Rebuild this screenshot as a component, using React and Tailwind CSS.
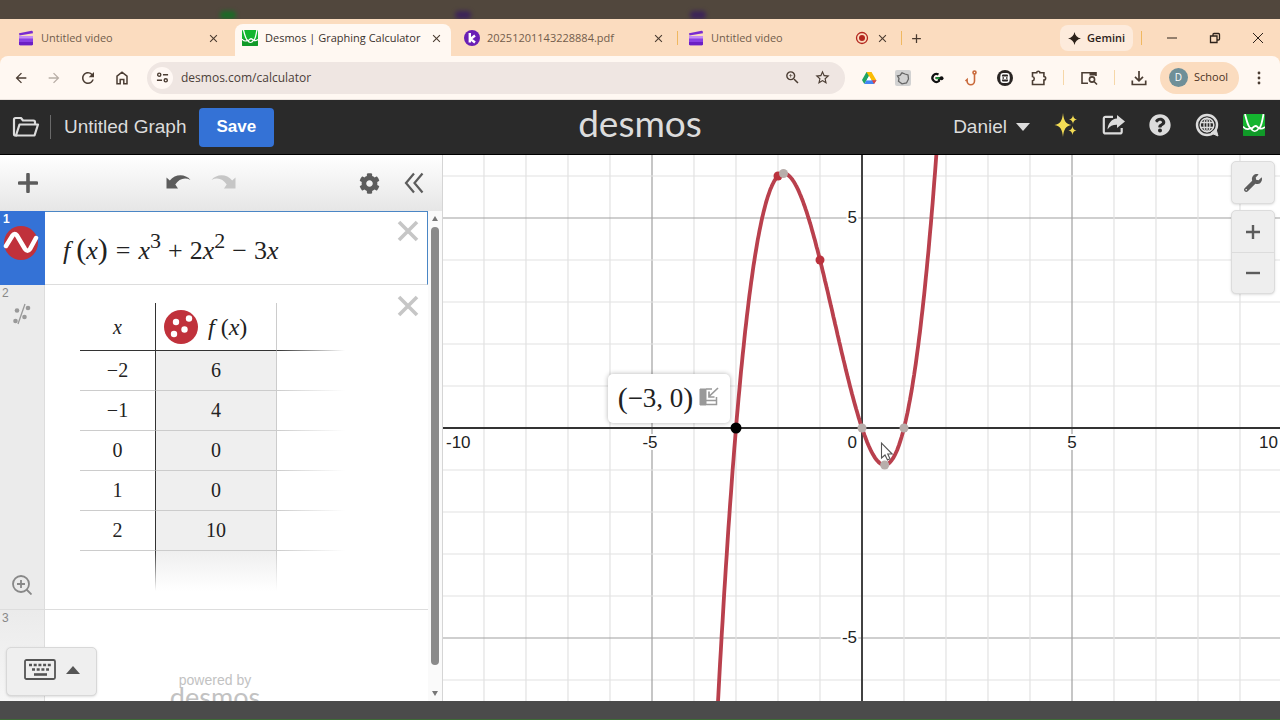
import { FaWrench, FaCog, FaQuestionCircle } from 'react-icons/fa';
import { MdArrowBack, MdArrowForward, MdRefresh, MdClose, MdAdd, MdZoomIn, MdStarBorder } from 'react-icons/md';

const UNIT = 42;
const ORIGIN = { x: 419, y: 273 };
const VIEW = { w: 837, h: 546 };

const px = (x) => ORIGIN.x + x * UNIT;
const py = (y) => ORIGIN.y - y * UNIT;
const f = (x) => x ** 3 + 2 * x ** 2 - 3 * x;

const rows = [
  ['−2', '6'],
  ['−1', '4'],
  ['0', '0'],
  ['1', '0'],
  ['2', '10'],
];

function curvePath() {
  const points = [];
  for (let x = -3.6; x <= 2; x += 0.02) {
    points.push(`${px(x).toFixed(1)},${py(f(x)).toFixed(1)}`);
  }
  return `M${points.join('L')}`;
}

function ClapperIcon() {
  return (
    <svg viewBox="0 0 16 16" className="size-4 shrink-0">
      <path d="M1 3.2 13.6.8a1 1 0 0 1 1.1.8l.3 1.6L1.4 5.6z" fill="#7a2bd0" />
      <path d="M1 6h14v3.5H1z" fill="#c48cf5" />
      <path d="M1 8.5h14V14a1.2 1.2 0 0 1-1.2 1.2H2.2A1.2 1.2 0 0 1 1 14z" fill="#8a3fe4" />
      <path d="M1 12h14v2a1.2 1.2 0 0 1-1.2 1.2H2.2A1.2 1.2 0 0 1 1 14z" fill="#6a1fc4" />
    </svg>
  );
}

function DesmosIcon({ className }) {
  return (
    <svg viewBox="0 0 22 22" className={`shrink-0 ${className}`}>
      <rect width="22" height="22" rx="1.5" fill="#14b52f" />
      <path d="M0 12h22v8.5a1.5 1.5 0 0 1-1.5 1.5h-19A1.5 1.5 0 0 1 0 20.5z" fill="#109a28" />
      <path d="M2 0C4 8 5.500 14 8 14.500c2 0 2.500-2.500 4.500-2.500s2.500 2.500 4 2C18.500 12 19.500 6 20.500 0" fill="none" stroke="#fff" strokeWidth="1.800" />
      <path d="M0 12.500c2.500 3 5.500 3 7.500 1.500 2.500 4 5.500 4.500 8.500 0 2 1.500 4 .5 6-1" fill="none" stroke="#fff" strokeWidth="1.600" />
    </svg>
  );
}

function KamiIcon() {
  return (
    <svg viewBox="0 0 16 16" className="size-4 shrink-0">
      <circle cx="8" cy="8" r="8" fill="#6a1fb5" />
      <path d="M5.800 3v9.500M11 5.500 6.500 9l4.500 3.500" fill="none" stroke="#fff" strokeWidth="2.400" />
    </svg>
  );
}

function Tab({ icon, title, className, active, recording }) {
  return (
    <div
      className={`flex h-full shrink-0 items-center gap-[7px] pb-1 text-[11px] ${className} ${
        active ? 'rounded-t-lg bg-[#fff8f2] text-[#3b322c]' : 'text-[#725d4c]'
      }`}
    >
      {icon}
      <button type="button" className="min-w-0 flex-1 text-left whitespace-nowrap">{title}</button>
      {recording && (
        <svg viewBox="0 0 14 14" className="size-[14px]">
          <circle cx="7" cy="7" r="5.500" fill="none" stroke="#b3261e" strokeWidth="1.300" />
          <circle cx="7" cy="7" r="3" fill="#b3261e" />
        </svg>
      )}
      <button type="button" aria-label="Close tab" className="text-[#4a3b30]">
        <MdClose size={13} />
      </button>
    </div>
  );
}

function TabStrip() {
  return (
    <div className="flex h-[37px] shrink-0 items-center bg-[#fbdcbf] pt-[5px]">
      <Tab icon={<ClapperIcon />} title="Untitled video" className="w-[235px] pr-[15px] pl-[18px]" />
      <Tab icon={<DesmosIcon className="size-4" />} title="Desmos | Graphing Calculator" active className="w-[216px] pr-2 pl-[7px]" />
      <Tab icon={<KamiIcon />} title="20251201143228884.pdf" className="w-[226px] pr-3 pl-[13px]" />
      <span className="mb-1 h-[14px] w-px bg-[#f0b860]" />
      <Tab icon={<ClapperIcon />} title="Untitled video" recording className="w-[223px] pr-3 pl-[10px]" />
      <span className="mb-1 h-[14px] w-px bg-[#f0b860]" />
      <button type="button" aria-label="New tab" className="mb-1 ml-[7px] text-[#4a3b30]">
        <MdAdd size={15} />
      </button>
      <div className="mb-1 ml-auto flex items-center pr-4 text-[#2d221a]">
        <button type="button" className="flex h-[26px] items-center gap-1.5 rounded-lg bg-[#fdebdc] px-2 text-[11px] font-semibold">
          <svg viewBox="0 0 14 14" className="size-[13px]">
            <path d="M7 0c.8 4 3 6.200 7 7-4 .8-6.200 3-7 7-.8-4-3-6.200-7-7 4-.8 6.200-3 7-7z" fill="currentColor" />
          </svg>
          Gemini
        </button>
        <span className="mr-6 ml-2 h-[14px] w-px bg-[#f0b860]" />
        <button type="button" aria-label="Minimize">
          <svg viewBox="0 0 12 12" className="size-3"><path d="M1 6h10" stroke="currentColor" /></svg>
        </button>
        <button type="button" aria-label="Restore" className="ml-[31px]">
          <svg viewBox="0 0 12 12" className="size-3" fill="none" stroke="currentColor" strokeWidth="1.300">
            <path d="M1.500 4h6.500v6.500H1.500zM4 4V2.500A1 1 0 0 1 5 1.500h4.500a1 1 0 0 1 1 1V7a1 1 0 0 1-1 1H8" />
          </svg>
        </button>
        <button type="button" aria-label="Close window" className="ml-[31px]">
          <svg viewBox="0 0 12 12" className="size-3"><path d="m1 1 10 10M11 1 1 11" stroke="currentColor" /></svg>
        </button>
      </div>
    </div>
  );
}

function Extensions() {
  return (
    <div className="flex items-center gap-[18px] text-[#4b3d33]">
      <button type="button" aria-label="Google Drive">
        <svg viewBox="0 0 16 16" className="size-4">
          <path d="M5.500 2h5L8 6.200 3.300 14 1 10z" fill="#1fa463" />
          <path d="M5.500 2h5L15.500 10.500h-5z" fill="#fbbc04" />
          <path d="M3.300 14 5.600 10.200h9.900L13 14z" fill="#4285f4" />
          <path d="m11 10.200 4.500 0L13 14z" fill="#ea4335" />
          <path d="M8 6 10.400 10.200H5.600z" fill="#fff" />
        </svg>
      </button>
      <button type="button" aria-label="Sketch extension">
        <svg viewBox="0 0 16 16" className="size-4" fill="none">
          <rect width="16" height="16" rx="2" fill="#d2d2d2" />
          <path d="m2.500 6 2.500-.5L7 2.800l3 1.200 3 1 .5 4-2 4-4.500.8-3.500-2.500.5-3z" stroke="#666" strokeWidth="1.300" />
        </svg>
      </button>
      <button type="button" aria-label="Grammar extension">
        <svg viewBox="0 0 16 16" className="size-4" fill="none">
          <path d="M9.500 4.500A4 4 0 1 0 10 11V8H6.500" stroke="#111" strokeWidth="2.200" />
          <path d="M7 8.200h5" stroke="#1c9a3a" strokeWidth="2" />
          <circle cx="12.500" cy="8.200" r="2" fill="#111" />
        </svg>
      </button>
      <button type="button" aria-label="Hook extension">
        <svg viewBox="0 0 16 16" className="size-4" fill="none" stroke="#c9693a" strokeWidth="1.600">
          <circle cx="11.500" cy="2.500" r="1.500" />
          <path d="M11.500 4v7a3.700 3.700 0 0 1-7.400 0V9.500L2.500 11" />
        </svg>
      </button>
      <button type="button" aria-label="Reader extension">
        <svg viewBox="0 0 16 16" className="size-4">
          <circle cx="8" cy="8" r="8" fill="#2a2523" />
          <rect x="4.200" y="3.800" width="7.600" height="8.400" rx="2" fill="none" stroke="#fff" strokeWidth="1.500" />
          <path d="M3.500 6.500h9v3h-9z" fill="#fff" />
          <path d="M5.500 7.300h1.500v1.400H5.500zM9 7.300h1.500v1.400H9z" fill="#2a2523" />
        </svg>
      </button>
      <button type="button" aria-label="Extensions">
        <svg viewBox="0 0 16 16" className="size-4" fill="none" stroke="currentColor" strokeWidth="1.600">
          <path d="M1.500 2.800H5.700a1.600 1.600 0 0 1 3.200 0h4v3.700a1.600 1.600 0 0 1 0 3.500v4.500H1.500v-3.700a2.200 2.200 0 0 0 0-4.300z" />
        </svg>
      </button>
    </div>
  );
}

function AddressBar() {
  return (
    <div className="flex h-[44px] shrink-0 items-center bg-[#fbdcbf]">
      <div className="flex h-full w-full items-center rounded-t-lg border-b border-[#e9e2dd] bg-[#fff8f2] pr-[13px] pl-[13px] text-[#4b3d33]">
        <div className="flex items-center gap-[17px]">
          <button type="button" aria-label="Back"><MdArrowBack size={16} /></button>
          <button type="button" aria-label="Forward" className="text-[#b8aea6]"><MdArrowForward size={16} /></button>
          <button type="button" aria-label="Reload"><MdRefresh size={18} /></button>
          <button type="button" aria-label="Home">
            <svg viewBox="0 0 16 16" className="size-4" fill="none" stroke="currentColor" strokeWidth="1.500">
              <path d="M3 6.200 8 2.200l5 4v7.600H9.800V9.500H6.200v4.300H3z" />
            </svg>
          </button>
        </div>
        <div className="ml-[17px] flex h-8 flex-1 items-center rounded-full bg-[#efe6e2] pr-[14px] pl-1">
          <button type="button" aria-label="Site information" className="flex size-[22px] items-center justify-center rounded-full bg-[#fff8f4]">
            <svg viewBox="0 0 14 14" className="size-[13px]" fill="none" stroke="currentColor" strokeWidth="1.500">
              <circle cx="3.500" cy="4" r="1.700" />
              <path d="M7.500 4H13M1 10h5.500" />
              <circle cx="10.500" cy="10" r="1.700" />
            </svg>
          </button>
          <input
            type="text"
            aria-label="Address"
            defaultValue="desmos.com/calculator"
            className="ml-2 min-w-0 flex-1 bg-transparent text-xs text-[#4b4039] outline-none"
          />
          <button type="button" aria-label="Zoom"><MdZoomIn size={17} /></button>
          <button type="button" aria-label="Bookmark" className="ml-[13px]"><MdStarBorder size={17} /></button>
        </div>
        <div className="ml-4 flex items-center">
          <Extensions />
          <span className="mr-4 ml-4 h-[15px] w-px bg-[#f6d7a8]" />
          <button type="button" aria-label="Search side panel">
            <svg viewBox="0 0 18 16" className="h-4 w-[18px]" fill="none" stroke="currentColor" strokeWidth="1.600">
              <path d="M8 13.200H2V2.800h14V6" />
              <path d="M9.500 2.500H16V5.500H9.500z" fill="currentColor" stroke="none" />
              <circle cx="12" cy="9.500" r="2.600" />
              <path d="m14 11.500 3 3" />
            </svg>
          </button>
          <span className="mr-4 ml-4 h-[15px] w-px bg-[#f6d7a8]" />
          <button type="button" aria-label="Downloads">
            <svg viewBox="0 0 16 16" className="size-4" fill="none" stroke="currentColor" strokeWidth="1.700">
              <path d="M8 1v9.500M4 6.800l4 4 4-4M1.300 10.500v4h13.400v-4" />
            </svg>
          </button>
          <button type="button" className="ml-[13px] flex h-8 w-[79px] items-center gap-1.5 rounded-full bg-[#fbdcbf] pl-[9px] text-[11px] text-[#4b3324]">
            <span className="flex size-[19px] items-center justify-center rounded-full bg-[#6f8f98] text-[10px] text-white">D</span>
            School
          </button>
          <button type="button" aria-label="Menu" className="ml-3">
            <svg viewBox="0 0 16 16" className="size-4" fill="currentColor">
              <circle cx="8" cy="3" r="1.400" />
              <circle cx="8" cy="8" r="1.400" />
              <circle cx="8" cy="13" r="1.400" />
            </svg>
          </button>
        </div>
      </div>
    </div>
  );
}

function Header() {
  return (
    <header className="grid h-[55px] shrink-0 grid-cols-[1fr_auto_1fr] items-center border-b border-black bg-[#2a2a2a] text-[19px] text-[#dcdcdc]">
      <div className="flex items-center pl-3">
        <button type="button" aria-label="Open graph">
          <svg viewBox="0 0 28 22" className="h-[22px] w-7" fill="none" stroke="currentColor" strokeWidth="2.200" strokeLinejoin="round">
            <path d="M5 19.500H3.500a1.500 1.500 0 0 1-1.500-1.500V3.500A1.500 1.500 0 0 1 3.500 2H9l2 2.500h10.500A1.500 1.500 0 0 1 23 6v2" />
            <path d="M7.500 8.500H26l-3.500 11H4z" />
          </svg>
        </button>
        <span className="ml-2.5 h-6 w-px bg-[#6a6a6a]" />
        <button type="button" className="ml-[13px]">Untitled Graph</button>
        <button type="button" className="ml-3 h-[39px] rounded-[4px] bg-[#3472d6] px-[18px] text-[17px] font-bold text-white">Save</button>
      </div>
      <a href="#desmos" className="pb-2 font-['Lato',sans-serif] text-[37px] leading-[46px]">desmos</a>
      <div className="flex items-center justify-end gap-6 pr-[15px]">
        <button type="button" className="flex items-center gap-[9px]">
          Daniel
          <svg viewBox="0 0 14 8" className="h-2 w-[14px]"><path d="M0 0h14L7 8z" fill="currentColor" /></svg>
        </button>
        <button type="button" aria-label="What's new" className="pb-1">
          <svg viewBox="0 0 24 26" className="h-[26px] w-6" fill="#f3dc55">
            <path d="M9 1c.8 7.500 2.500 11 8.500 12-6 1-7.700 4.500-8.500 12-.8-7.500-2.500-11-8.500-12C6.500 12 8.200 8.500 9 1z" />
            <path d="M19 3c.4 2.800 1.200 4 4 4.500-2.800.5-3.600 1.700-4 4.500-.4-2.800-1.200-4-4-4.500 2.800-.5 3.600-1.700 4-4.500zM18.500 14c.4 2.800 1.200 4 4 4.500-2.800.5-3.600 1.700-4 4.500-.4-2.800-1.200-4-4-4.500 2.800-.5 3.600-1.700 4-4.500z" />
          </svg>
        </button>
        <button type="button" aria-label="Share" className="pb-1">
          <svg viewBox="0 0 23 20" className="h-5 w-[23px]" fill="none" stroke="currentColor" strokeWidth="2.200">
            <path d="M11 1.800H3.500A1.700 1.700 0 0 0 1.800 3.500v13.200a1.700 1.700 0 0 0 1.700 1.700h14.500a1.700 1.700 0 0 0 1.700-1.700V13" />
            <path d="M15 0 23 6.500 15 13V9.800c-4-.1-7 1-9.500 4.700C6 8.500 9.500 4 15 3.500z" fill="currentColor" stroke="none" />
          </svg>
        </button>
        <button type="button" aria-label="Help" className="pb-1"><FaQuestionCircle size={22} /></button>
        <button type="button" aria-label="Language" className="pb-1">
          <svg viewBox="0 0 24 24" className="size-6" fill="none" stroke="currentColor">
            <circle cx="12" cy="12" r="10" strokeWidth="2.400" />
            <path d="m16 20 7 3-2-7z" fill="currentColor" />
            <circle cx="12" cy="12" r="6.800" strokeWidth="1.500" />
            <ellipse cx="12" cy="12" rx="3" ry="6.800" strokeWidth="1.300" />
            <path d="M12 5v14M6 9.500h12M6 14.500h12" strokeWidth="1.300" />
          </svg>
        </button>
        <a href="#account" aria-label="Desmos" className="pb-1"><DesmosIcon className="size-[22px]" /></a>
      </div>
    </header>
  );
}

function PanelToolbar() {
  return (
    <div className="flex h-14 shrink-0 items-center bg-linear-to-b from-white to-[#e6e6e6] pr-[18px] pl-[18px] text-[#5c5c5c]">
      <button type="button" aria-label="Add item">
        <svg viewBox="0 0 20 20" className="size-5"><path d="M10 1.500v17M1.500 10h17" stroke="currentColor" strokeWidth="3.600" strokeLinecap="round" /></svg>
      </button>
      <div className="ml-auto flex gap-5 pb-0.5">
        <button type="button" aria-label="Undo">
          <svg viewBox="0 0 26 16" className="h-4 w-[26px]" fill="currentColor">
            <path d="M1.500 3.500 4.800 6.500C10 0 20-.5 25.500 6 19.500 3 14 5 10.300 10.500L13 14.500H1.500z" />
          </svg>
        </button>
        <button type="button" aria-label="Redo" disabled className="text-[#c6c6c6]">
          <svg viewBox="0 0 26 16" className="h-4 w-[26px]" fill="currentColor">
            <path d="M24.500 3.500 21.200 6.500C16 0 6-.5.5 6 6.500 3 12 5 15.700 10.500L13 14.500h11.500z" />
          </svg>
        </button>
      </div>
      <button type="button" aria-label="Edit list" className="ml-[122px]"><FaCog size={21} /></button>
      <button type="button" aria-label="Hide list" className="ml-6">
        <svg viewBox="0 0 20 22" className="h-[22px] w-5" fill="none" stroke="currentColor" strokeWidth="2.200">
          <path d="M10 1.500 2 11l8 9.500M18.500 1.500l-8 9.500 8 9.500" />
        </svg>
      </button>
    </div>
  );
}

function DeleteButton() {
  return (
    <button type="button" aria-label="Delete" className="shrink-0 self-start text-[#c6c6c6]">
      <svg viewBox="0 0 22 22" className="size-[22px]"><path d="m2 2 18 18M20 2 2 20" stroke="currentColor" strokeWidth="3.600" /></svg>
    </button>
  );
}

function Formula() {
  return (
    <p className="flex flex-1 items-baseline font-['Liberation_Serif',serif] text-[26px] leading-8 text-[#222]">
      <i>f</i>
      <span className="ml-1.5 text-[30px] leading-8">(</span>
      <i>x</i>
      <span className="text-[30px] leading-8">)</span>
      <span className="mx-2">=</span>
      <i>x</i>
      <sup className="text-[22px] leading-none">3</sup>
      <span className="mx-[7px]">+</span>
      2<i>x</i>
      <sup className="text-[22px] leading-none">2</sup>
      <span className="mx-[7px]">−</span>
      3<i>x</i>
    </p>
  );
}

function ValueTable() {
  const fade = 'w-[68px] bg-linear-to-r to-transparent bg-bottom bg-no-repeat';
  return (
    <table className="border-separate border-spacing-0 text-center font-['Liberation_Serif',serif] text-xl text-[#222]">
      <thead>
        <tr className="h-12">
          <th scope="col" className="w-[75px] border-b border-[#333] font-normal italic">x</th>
          <th scope="col" className="w-[122px] border-r border-b border-l border-r-[#ccc] border-b-[#333] border-l-[#333] p-0 font-normal">
            <div className="flex items-center gap-2.5 pl-2 text-2xl">
              <svg viewBox="0 0 34 34" className="size-[34px]">
                <circle cx="17" cy="17" r="17" fill="#c0313b" />
                <g fill="#fff">
                  <circle cx="25" cy="8.500" r="3.200" />
                  <circle cx="12" cy="12" r="3.200" />
                  <circle cx="20.500" cy="19.500" r="3.200" />
                  <circle cx="10" cy="24" r="3.200" />
                </g>
              </svg>
              <span><i>f</i> (<i>x</i>)</span>
            </div>
          </th>
          <th className={`${fade} from-[#333] bg-[length:100%_1px]`} />
        </tr>
      </thead>
      <tbody>
        {rows.map(([x, y]) => (
          <tr key={x} className="h-10">
            <td className="border-b border-[#ccc] p-0 pb-0.5">{x}</td>
            <td className="border-r border-b border-l border-r-[#ccc] border-b-[#ccc] border-l-[#333] bg-[#efefef] p-0 pb-0.5">{y}</td>
            <td className={`${fade} from-[#ccc] bg-[length:100%_1px] p-0`} />
          </tr>
        ))}
        <tr className="h-10">
          <td />
          <td className="p-0">
            <div className="flex h-10">
              <span className="w-px bg-linear-to-b from-[#333] to-transparent" />
              <span className="flex-1 bg-linear-to-b from-[#efefef] to-white" />
              <span className="w-px bg-linear-to-b from-[#ccc] to-transparent" />
            </div>
          </td>
          <td />
        </tr>
      </tbody>
    </table>
  );
}

function Scrollbar() {
  return (
    <div className="flex w-[14px] shrink-0 flex-col items-center bg-[#fafafa] py-1">
      <svg viewBox="0 0 8 6" className="h-1.5 w-2"><path d="M1 6h6L4 1z" fill="#777" /></svg>
      <div className="mt-1.5 mb-[26px] w-2 flex-1 rounded-full bg-[#8a8a8a]" />
      <svg viewBox="0 0 8 6" className="h-1.5 w-2"><path d="M1 0h6L4 5z" fill="#777" /></svg>
    </div>
  );
}

function ExpressionPanel() {
  return (
    <section className="relative flex w-[443px] shrink-0 flex-col border-r border-[#d5d5d5] bg-white">
      <PanelToolbar />
      <div className="flex min-h-0 flex-1">
        <div className="flex min-w-0 flex-1 flex-col overflow-hidden">
          {/* Expression 1 */}
          <div className="flex h-[74px] shrink-0">
            <div className="w-[45px] shrink-0 bg-[#3472d6] px-[3px] pt-0.5 text-xs leading-3 font-bold text-white">
              1
              <svg viewBox="0 0 36 36" className="size-[36px]">
                <circle cx="18" cy="18" r="17" fill="#c0313b" />
                <path d="M3 21 9.500 10.500q2-3 4.500 0L22 24q2.500 3.500 5 0L33 13" fill="none" stroke="#fff" strokeWidth="4.500" strokeLinecap="round" />
              </svg>
            </div>
            <div className="flex flex-1 items-center border-t border-r border-b border-t-[#4a86c5] border-r-[#4a86c5] border-b-[#ddd] pt-2 pr-2 pb-1 pl-[18px]">
              <Formula />
              <DeleteButton />
            </div>
          </div>
          {/* Expression 2 */}
          <div className="flex shrink-0 border-b border-[#ddd]">
            <div className="flex w-[45px] shrink-0 flex-col border-r border-[#ddd] bg-[#ebebeb] px-0.5 pb-[14px] text-xs leading-4 text-[#888]">
              2
              <svg viewBox="0 0 20 22" className="mt-0.5 ml-2.5 h-[22px] w-5" fill="#999">
                <path d="m13 1-7 20" stroke="#999" strokeWidth="1.300" />
                <circle cx="5" cy="7.500" r="2.300" />
                <circle cx="16" cy="5" r="2.300" />
                <circle cx="12.500" cy="14" r="2.300" />
                <circle cx="3.500" cy="18" r="2.300" />
              </svg>
              <button type="button" aria-label="Zoom fit" className="mt-auto ml-2.5 size-5">
                <svg viewBox="0 0 20 20" className="size-5" fill="none" stroke="#888" strokeWidth="1.800">
                  <circle cx="9" cy="9" r="8" />
                  <path d="m14.500 14.500 5 5M9 5v8M5 9h8" />
                </svg>
              </button>
            </div>
            <div className="flex flex-1 items-start justify-between pt-[18px] pr-[9px] pb-[18px] pl-[35px]">
              <ValueTable />
              <div className="-mt-2"><DeleteButton /></div>
            </div>
          </div>
          {/* Expression 3 */}
          <div className="flex min-h-0 flex-1">
            <div className="w-[45px] shrink-0 border-r border-[#ddd] bg-linear-to-b from-[#ebebeb] to-[#f6f6f6] px-0.5 text-xs leading-4 text-[#888]">3</div>
            <div className="flex flex-1 flex-col items-center pt-[62px] pr-[43px] text-[#c2c2c2]">
              <span className="text-sm leading-4">powered by</span>
              <a href="#desmos" className="font-['Lato',sans-serif] text-[27px] leading-[18px]">desmos</a>
            </div>
          </div>
        </div>
        <Scrollbar />
      </div>
      <button
        type="button"
        aria-label="Show keypad"
        className="absolute bottom-[5px] left-1.5 flex h-[49px] w-[91px] items-center justify-center gap-2.5 rounded-[5px] border border-[#d8d8d8] bg-[#efefef] pb-1 text-[#555] shadow-sm"
      >
        <svg viewBox="0 0 32 21" className="h-[21px] w-8" fill="none" stroke="currentColor">
          <rect x="1" y="1" width="30" height="19" rx="1.500" strokeWidth="1.800" />
          <path d="M5 6h22M8 10.500h17" strokeWidth="2.500" strokeDasharray="3 1.700" />
          <path d="M10 15.500h13" strokeWidth="2.600" />
        </svg>
        <svg viewBox="0 0 14 8" className="h-2 w-[14px]"><path d="M0 8h14L7 0z" fill="currentColor" /></svg>
      </button>
    </section>
  );
}

function Graph() {
  const units = Array.from({ length: 21 }, (_, i) => i - 10);
  const labels = [
    { text: '-10', x: 3, y: 293, anchor: 'start' },
    { text: '-5', x: 207, y: 293, anchor: 'middle' },
    { text: '0', x: 414, y: 293, anchor: 'end' },
    { text: '5', x: 629, y: 293, anchor: 'middle' },
    { text: '10', x: 835, y: 293, anchor: 'end' },
    { text: '5', x: 414, y: 68, anchor: 'end' },
    { text: '-5', x: 414, y: 488, anchor: 'end' },
  ];
  return (
    <main className="relative min-w-0 flex-1 bg-white">
      <svg viewBox={`0 0 ${VIEW.w} ${VIEW.h}`} preserveAspectRatio="xMidYMid slice" className="block size-full">
        {units.map((n) => (
          <g key={n} stroke={n % 5 === 0 ? '#a0a0a0' : '#e2e2e2'} strokeWidth="1.200">
            <line x1={px(n)} x2={px(n)} y1="0" y2={VIEW.h} />
            <line x1="0" x2={VIEW.w} y1={py(n)} y2={py(n)} />
          </g>
        ))}
        <g stroke="#333" strokeWidth="1.800">
          <line x1={px(0)} x2={px(0)} y1="0" y2={VIEW.h} />
          <line x1="0" x2={VIEW.w} y1={py(0)} y2={py(0)} />
        </g>
        <g className="font-['Liberation_Sans',sans-serif] text-[17px]" fill="#222" stroke="#fff" strokeWidth="4" paintOrder="stroke">
          {labels.map((l) => (
            <text key={`${l.x}-${l.y}`} x={l.x} y={l.y} textAnchor={l.anchor}>{l.text}</text>
          ))}
        </g>
        <path d={curvePath()} fill="none" stroke="#b9404d" strokeWidth="3.800" />
        <circle cx={px(-2)} cy={py(6)} r="4.500" fill="#bb323d" />
        <circle cx={px(-1)} cy={py(4)} r="4.500" fill="#bb323d" />
        <g fill="#b8aeab">
          <circle cx={px(-1.87)} cy={py(6.06)} r="4.500" />
          <circle cx={px(0)} cy={py(0)} r="4.500" />
          <circle cx={px(1)} cy={py(0)} r="4.500" />
          <circle cx={px(0.54)} cy={py(-0.88)} r="4.500" />
        </g>
        <circle cx={px(-3)} cy={py(0)} r="5.500" fill="#000" />
        <path d="M438.500 288v15l3.500-3 2.500 5 2.500-1.200-2.300-4.800h4.500z" fill="#fff" stroke="#555" strokeWidth="1.100" />
      </svg>

      <div className="absolute right-1/2 bottom-1/2 mr-[132px] mb-[5px] flex h-[49px] w-[122px] items-center justify-center gap-1.5 rounded-[5px] bg-white text-[#222] shadow-[0_0_5px_rgba(0,0,0,0.3)]">
        <span className="flex items-center pb-0.5 font-['Liberation_Serif',serif] text-[27px] leading-8">
          <span className="text-[30px]">(</span>−3, 0<span className="text-[30px]">)</span>
        </span>
        <button type="button" aria-label="Add point to list" className="pb-1">
          <svg viewBox="0 0 20 20" className="size-5" fill="none" stroke="#999">
            <path d="M1 2h6v16H1z" fill="#999" />
            <path d="M7 2h6M7 17.500h10.500V10M7 13.500h10" strokeWidth="1.500" />
            <path d="M19 1 10 9.500M10 4.500v5.500h5.500" strokeWidth="1.700" />
          </svg>
        </button>
      </div>

      <div className="absolute top-1.5 right-[5px] flex w-11 flex-col gap-1.5 text-[#5c5c5c]">
        <button type="button" aria-label="Graph settings" className="flex h-[43px] items-center justify-center rounded-[5px] border border-[#dcdcdc] bg-[#eee] shadow-sm">
          <FaWrench size={18} />
        </button>
        <div className="flex flex-col rounded-[5px] border border-[#dcdcdc] bg-[#eee] shadow-sm">
          <button type="button" aria-label="Zoom in" className="flex h-[42px] items-center justify-center border-b border-[#dcdcdc]">
            <svg viewBox="0 0 14 14" className="size-[14px]"><path d="M7 0v14M0 7h14" stroke="currentColor" strokeWidth="2.400" /></svg>
          </button>
          <button type="button" aria-label="Zoom out" className="flex h-10 items-center justify-center">
            <svg viewBox="0 0 14 14" className="size-[14px]"><path d="M0 7h14" stroke="currentColor" strokeWidth="2.400" /></svg>
          </button>
        </div>
      </div>
    </main>
  );
}

export default function App() {
  return (
    <div className="flex h-screen flex-col overflow-hidden bg-white font-['Liberation_Sans',Arial,sans-serif]">
      <div className="flex h-[19px] shrink-0 items-end overflow-hidden bg-[#51473d]">
        <span className="ml-[220px] h-2 w-4 rounded-full bg-[#1b6a26] blur-[2px]" />
        <span className="ml-[219px] h-2 w-4 rounded-full bg-[#3c2358] blur-[2px]" />
        <span className="ml-[219px] h-2 w-4 rounded-full bg-[#3c2358] blur-[2px]" />
      </div>
      <div className="shrink-0 font-['Open_Sans',sans-serif]">
        <TabStrip />
        <AddressBar />
      </div>
      <Header />
      <div className="flex min-h-0 flex-1">
        <ExpressionPanel />
        <Graph />
      </div>
      <div className="h-[19px] shrink-0 border-b border-[#3d6b35] bg-[#4b4b4b]" />
    </div>
  );
}
